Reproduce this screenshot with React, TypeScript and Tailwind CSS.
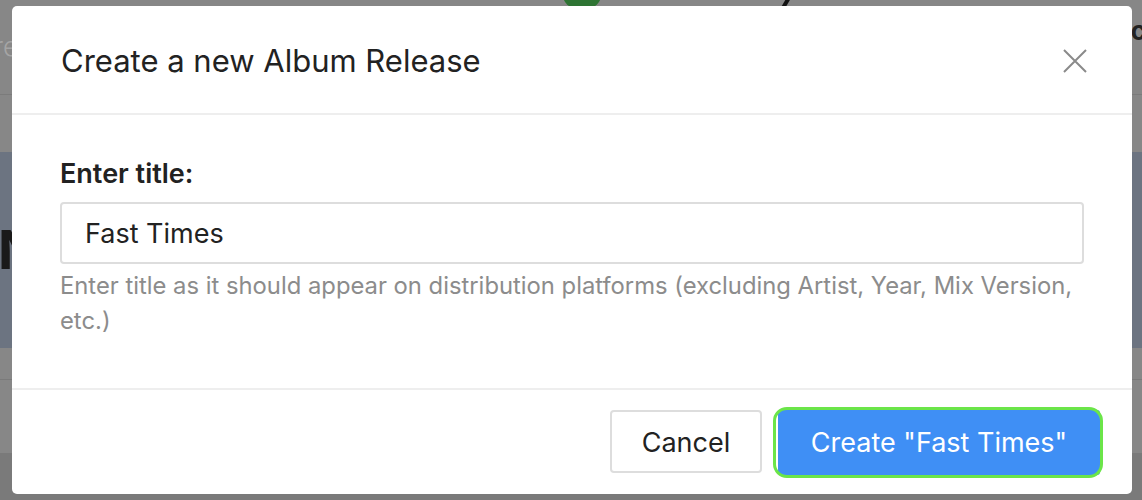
import React from "react";

function CloseIcon() {
  return (
    <svg width="24" height="24" viewBox="0 0 24 24" fill="none" stroke="#8a8a8a" strokeWidth="2" strokeLinecap="butt">
      <path d="M1 1 L23 23 M23 1 L1 23" />
    </svg>
  );
}

export default function App() {
  return (
    <div
      className="relative w-[1142px] h-[500px] overflow-hidden bg-[#878787]"
      style={{ fontFamily: "Inter, 'Noto Sans', sans-serif" }}
    >
      {/* dimmed page underneath */}
      <div className="flex flex-col w-full h-full">
        <div className="h-[58px] flex items-start">
          <div className="w-[563px] shrink-0">
            <span className="block text-[26px] leading-[26px] mt-[34px] -ml-[6px] text-[#a5a5a5] font-light">re</span>
          </div>
          <div className="mt-[-18px] w-[38px] h-[26px] rounded-full bg-[#2e7433] shrink-0" />
          <div className="w-[184px] shrink-0" />
          <div className="mt-[-6px] w-[4px] h-[14px] bg-[#111] rotate-[30deg] shrink-0" />
          <span className="flex-1" />
          <span className="text-[26px] leading-[26px] mt-[18px] -mr-[4px] font-bold text-[#222]">Mic</span>
        </div>
        <div className="h-[37px] border-b border-[#7b7b7b]" />
        <div className="h-[57px]" />
        <div className="h-[196px] bg-[#6c7481] flex items-center">
          <span className="text-[54px] font-bold text-[#1a1a1a] -ml-[2px] leading-none">N</span>
        </div>
        <div className="h-[32px] border-b border-[#7a7a7a]" />
        <div className="h-[73px]" />
        <div className="flex-1 bg-[#7a7a7a]" />
      </div>

      {/* modal */}
      <div className="absolute left-[12px] top-[6px] w-[1120px] h-[488px] bg-white rounded-[5px] flex flex-col">
        <div className="h-[109px] flex items-center justify-between pl-[49px] pr-[45px] border-b-2 border-[#eeeeee]">
          <h2 className="pt-[3px] text-[31px] text-[#222222] font-normal">Create a new Album Release</h2>
          <div className="pt-[2px]">
            <CloseIcon />
          </div>
        </div>
        <div className="flex-1 px-[48px] pt-[43px]">
          <label className="block text-[27px] leading-[31px] font-semibold text-[#222222]">Enter title:</label>
          <div className="mt-[13px] h-[62px] border-2 border-[#dddddd] rounded-[4px] flex items-center pt-[3px] px-[23px] text-[27px] text-[#222222]">
            Fast Times
          </div>
          <p className="mt-[4px] text-[23.8px] leading-[35px] text-[#8c8c8c]">
            Enter title as it should appear on distribution platforms (excluding Artist, Year, Mix Version, etc.)
          </p>
        </div>
        <div className="h-[106px] border-t-2 border-[#eeeeee] flex items-start justify-end pt-[20px] pr-[32px] gap-[16px]">
          <button className="h-[63px] w-[152px] border-2 border-[#dddddd] rounded-[4px] pt-[3px] text-[27px] text-[#222222] bg-white">
            Cancel
          </button>
          <div className="relative">
            <button className="h-[65px] w-[322px] rounded-[3px] bg-[#3f8ff5] pt-[2px] text-white text-[27px]">
              Create "Fast Times"
            </button>
            <div className="absolute -left-[5px] -top-[3px] -right-[3px] -bottom-[3px] rounded-[14px] border-[3px] border-[#6be549]" />
          </div>
        </div>
      </div>
    </div>
  );
}
